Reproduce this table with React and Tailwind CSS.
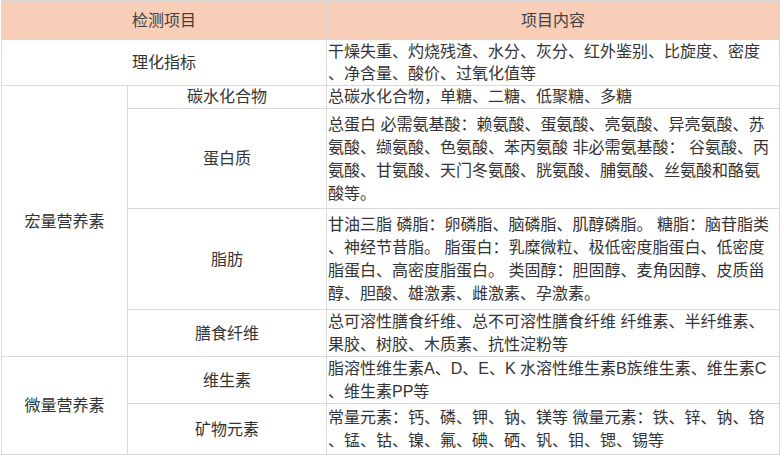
const rows = [
  { group: '宏量营养素', span: 4, name: '碳水化合物', h: 'h-[23px] leading-[22px]', text: '总碳水化合物，单糖、二糖、低聚糖、多糖' },
  {
    name: '蛋白质',
    h: 'h-[100px]',
    text: '总蛋白 必需氨基酸：赖氨酸、蛋氨酸、亮氨酸、异亮氨酸、苏氨酸、缬氨酸、色氨酸、苯丙氨酸 非必需氨基酸： 谷氨酸、丙氨酸、甘氨酸、天门冬氨酸、胱氨酸、脯氨酸、丝氨酸和酪氨酸等。',
  },
  {
    name: '脂肪',
    h: 'h-[101px]',
    text: '甘油三脂 磷脂：卵磷脂、脑磷脂、肌醇磷脂。 糖脂：脑苷脂类、神经节昔脂。 脂蛋白：乳糜微粒、极低密度脂蛋白、低密度脂蛋白、高密度脂蛋白。 类固醇：胆固醇、麦角因醇、皮质甾醇、胆酸、雄激素、雌激素、孕激素。',
  },
  { name: '膳食纤维', h: 'h-[46px]', text: '总可溶性膳食纤维、总不可溶性膳食纤维 纤维素、半纤维素、果胶、树胶、木质素、抗性淀粉等' },
  { group: '微量营养素', span: 2, name: '维生素', h: 'h-[46px]', text: '脂溶性维生素A、D、E、K 水溶性维生素B族维生素、维生素C、维生素PP等' },
  { name: '矿物元素', h: 'h-[51px]', text: '常量元素：钙、磷、钾、钠、镁等 微量元素：铁、锌、钠、铬、锰、钴、镍、氟、碘、硒、钒、钼、锶、锡等' },
];

const cell = 'border border-[#d9d9d9] align-middle';

export default function App() {
  return (
    <div className="w-[780px] h-[455px] overflow-hidden bg-white pl-px font-['Liberation_Sans','Noto_Sans_CJK_SC',sans-serif] text-[16px] leading-[23px] text-[#333]">
      <table className="table-fixed border-collapse w-[778px]">
        <colgroup>
          <col className="w-[126px]" />
          <col className="w-[199px]" />
          <col className="w-[453px]" />
        </colgroup>
        <tbody>
          <tr className="h-[39px] bg-[#f8ceb8] text-[#404040]">
            <td colSpan={2} className={`${cell} text-center`}>检测项目</td>
            <td className={`${cell} text-center`}>项目内容</td>
          </tr>
          <tr className="h-[46px] leading-[22px]">
            <td colSpan={2} className={`${cell} text-center`}>理化指标</td>
            <td className={`${cell} pl-px pr-[6px] [line-break:anywhere]`}>
              干燥失重、灼烧残渣、水分、灰分、红外鉴别、比旋度、密度、净含量、酸价、过氧化值等
            </td>
          </tr>
          {rows.map((r) => (
            <tr key={r.name} className={r.h}>
              {r.group && (
                <td rowSpan={r.span} className={`${cell} text-center leading-[23px]`}>{r.group}</td>
              )}
              <td className={`${cell} text-center`}>{r.name}</td>
              <td className={`${cell} pl-px pr-[6px] [line-break:anywhere]`}>{r.text}</td>
            </tr>
          ))}
        </tbody>
      </table>
    </div>
  );
}
